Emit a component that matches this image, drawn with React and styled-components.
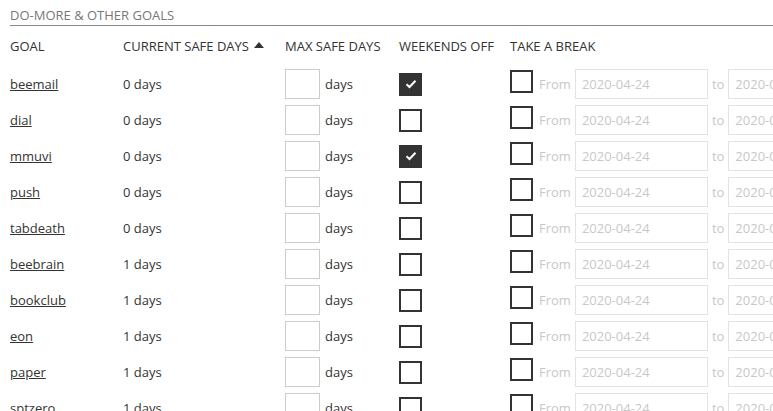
import React from 'react'
import styled, { createGlobalStyle } from 'styled-components'

const GlobalStyle = createGlobalStyle`
  body {
    margin: 0;
    background: #fff;
    font-family: 'Open Sans', 'Noto Sans', sans-serif;
    color: #333;
    overflow: hidden;
  }
`

const Page = styled.div`
  padding: 5px 0 0 10px;
  width: 900px;
`

const SectionTitle = styled.div`
  font-size: 13px;
  line-height: 20px;
  color: #777;
  text-transform: uppercase;
  border-bottom: 1px solid #888;
`

const Row = styled.div`
  display: grid;
  grid-template-columns: 113px 162px 114px 111px 1fr;
  align-items: center;
  height: ${(p) => (p.$head ? 40 : 36)}px;
  font-size: 13px;
`

const HeadCell = styled.div`
  text-transform: uppercase;
  color: #333;
  display: flex;
  align-items: center;
  gap: 5px;
`

const Caret = styled.span`
  width: 0;
  height: 0;
  border-left: 5px solid transparent;
  border-right: 5px solid transparent;
  border-bottom: 6px solid #333;
  margin-bottom: 2px;
`

const GoalLink = styled.a`
  color: #333;
  text-decoration: underline;
`

const Cell = styled.div`
  display: flex;
  align-items: center;
  gap: ${(p) => p.$gap || 5}px;
`

const NumInput = styled.div`
  width: 33px;
  height: 28px;
  border: 1px solid #ccc;
`

const Box = styled.span`
  width: 19px;
  height: 19px;
  border: 2px solid #333;
  background: ${(p) => (p.$on ? '#333' : '#fff')};
  display: inline-flex;
  align-items: center;
  justify-content: center;
  margin-top: ${(p) => (p.$lift ? '-6px' : '0')};
  margin-right: ${(p) => (p.$lift ? '2px' : '0')};
`

const Muted = styled.span`
  color: #c8c8c8;
`

const DateInput = styled.div`
  width: 125px;
  height: 28px;
  border: 1px solid #e3e3e3;
  color: #c8c8c8;
  display: flex;
  align-items: center;
  padding-left: 6px;
  flex-shrink: 0;
`

const Check = () => (
  <svg width="12" height="10" viewBox="0 0 12 10">
    <path d="M1.5 5.2 L4.5 8 L10.5 1.8" fill="none" stroke="#fff" strokeWidth="2" />
  </svg>
)

const goals = [
  ['beemail', 0, true],
  ['dial', 0, false],
  ['mmuvi', 0, true],
  ['push', 0, false],
  ['tabdeath', 0, false],
  ['beebrain', 1, false],
  ['bookclub', 1, false],
  ['eon', 1, false],
  ['paper', 1, false],
  ['sptzero', 1, false],
]

export default function App() {
  return (
    <Page>
      <GlobalStyle />
      <SectionTitle>Do-more &amp; other goals</SectionTitle>
      <Row $head>
        <HeadCell>Goal</HeadCell>
        <HeadCell>
          Current safe days <Caret />
        </HeadCell>
        <HeadCell>Max safe days</HeadCell>
        <HeadCell>Weekends off</HeadCell>
        <HeadCell>Take a break</HeadCell>
      </Row>
      {goals.map(([name, days, wk]) => (
        <Row key={name}>
          <div>
            <GoalLink href="#">{name}</GoalLink>
          </div>
          <div>{days} days</div>
          <Cell>
            <NumInput />
            days
          </Cell>
          <Cell>
            <Box $on={wk}>{wk && <Check />}</Box>
          </Cell>
          <Cell $gap={4}>
            <Box $lift />
            <Muted>From</Muted>
            <DateInput>2020-04-24</DateInput>
            <Muted>to</Muted>
            <DateInput>2020-04-24</DateInput>
          </Cell>
        </Row>
      ))}
    </Page>
  )
}
